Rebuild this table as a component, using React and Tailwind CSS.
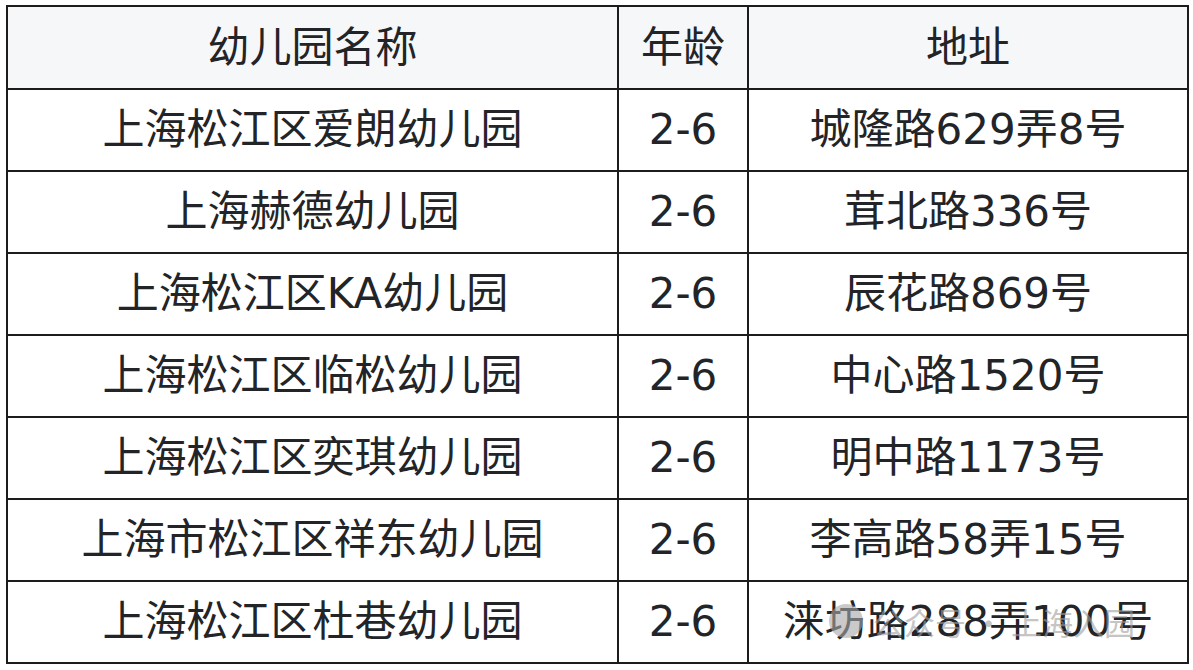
import React from "react";

const rows = [
  ["上海松江区爱朗幼儿园", "2-6", "城隆路629弄8号"],
  ["上海赫德幼儿园", "2-6", "茸北路336号"],
  ["上海松江区KA幼儿园", "2-6", "辰花路869号"],
  ["上海松江区临松幼儿园", "2-6", "中心路1520号"],
  ["上海松江区奕琪幼儿园", "2-6", "明中路1173号"],
  ["上海市松江区祥东幼儿园", "2-6", "李高路58弄15号"],
  ["上海松江区杜巷幼儿园", "2-6", "涞坊路288弄100号"],
];

export default function App() {
  return (
    <div className="min-h-screen bg-white pl-[6px] pt-[5px] font-['DejaVu_Sans','Noto_Sans_CJK_SC',sans-serif] text-[#222427]">
      <table className="w-[1181px] table-fixed border-collapse border-2 border-[#1c1c1c] text-center text-[42px] leading-none">
        <colgroup>
          <col className="w-[611px]" />
          <col className="w-[130px]" />
          <col className="w-[440px]" />
        </colgroup>
        <thead>
          <tr className="h-[83px] bg-[#f6f7f9]">
            <th className="border-2 border-[#1c1c1c] font-normal">幼儿园名称</th>
            <th className="border-2 border-[#1c1c1c] font-normal">年龄</th>
            <th className="border-2 border-[#1c1c1c] font-normal">地址</th>
          </tr>
        </thead>
        <tbody>
          {rows.map((r, i) => (
            <tr key={i} className="h-[82px] bg-white">
              <td className="border-2 border-[#1c1c1c]">{r[0]}</td>
              <td className="border-2 border-[#1c1c1c]">{r[1]}</td>
              <td className="relative border-2 border-[#1c1c1c]">
                {r[2]}
                {i === rows.length - 1 && (
                  <span className="pointer-events-none absolute left-[80px] top-[22px] flex items-center gap-[10px] font-['Noto_Sans_CJK_SC',sans-serif] text-[31px] text-[#a0a0a0] opacity-60">
                    <span className="h-[34px] w-[34px] rounded-full bg-[#a8a8a8]" />
                    公众号 · 上海入园
                  </span>
                )}
              </td>
            </tr>
          ))}
        </tbody>
      </table>
    </div>
  );
}
